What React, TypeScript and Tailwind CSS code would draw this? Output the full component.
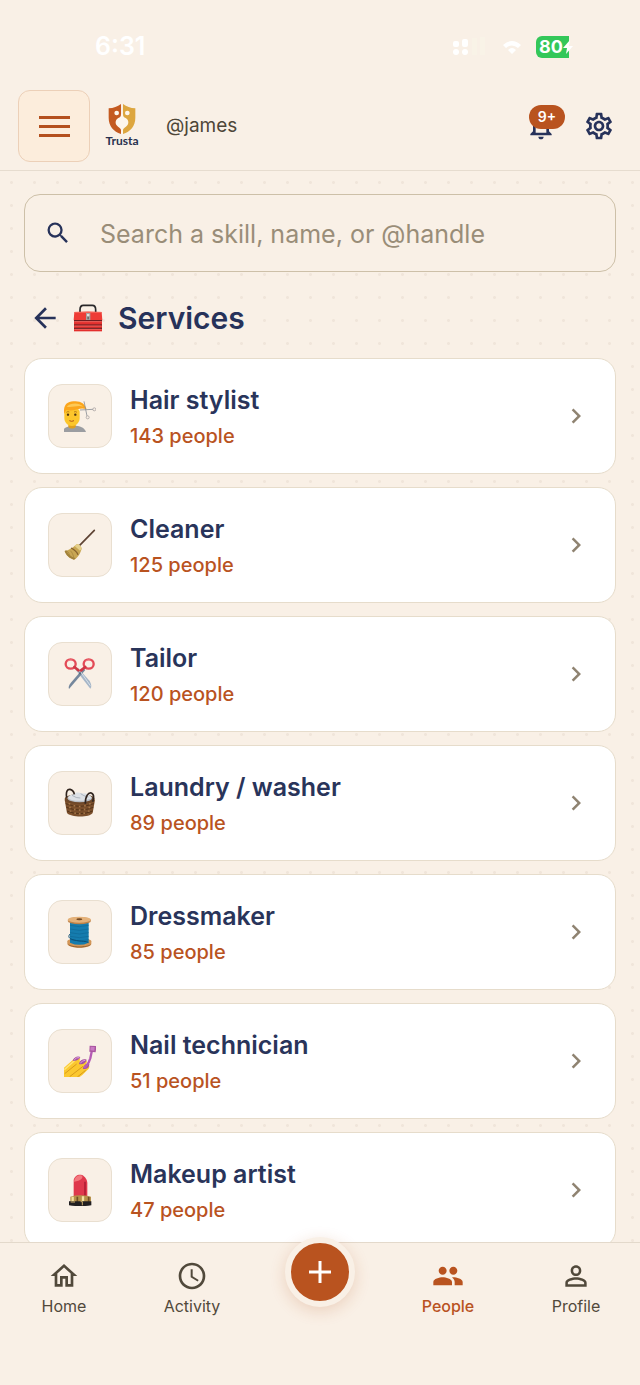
/**
 * Services directory screen
 * Lists the skills in a category with the number of people offering each
 */

import React from 'react'
import {
  MdAccessTime,
  MdArrowBack,
  MdChevronRight,
  MdNotificationsNone,
  MdOutlineHome,
  MdOutlineSettings,
  MdPeople,
  MdPersonOutline,
  MdSearch,
} from 'react-icons/md'

function HairIcon() {
  return (
    <svg viewBox="0 0 96 96" className="size-8" aria-hidden="true">
      <path d="M0 96V86c6-6 16-8 28-9 20 0 34 5 38 19z" fill="#9b9da1" />
      <path d="M13 68h22v13c-6 6-16 6-22 0z" fill="#e0a01d" />
      <path d="M1 36c0-18 46-18 46 0v18c0 14-11 24-23 24S1 68 1 54z" fill="#fcc62c" />
      <path d="M0 42C-2 18 6 5 28 4c22-2 34 6 40 24-12-4-20-2-27 0-12 4-24 4-34 2-3 4-4 8-7 12z" fill="#fba51c" />
      <path d="M8 20C20 8 44 6 58 20c-16-6-34 4-50 0z" fill="#fdc956" />
      <circle cx="12" cy="44" r="3.5" fill="#4f3415" />
      <circle cx="34" cy="44" r="3.5" fill="#4f3415" />
      <path d="M7 37q5-4 9-1M30 36q5-3 9 1" fill="none" stroke="#9a5e12" strokeWidth="2" />
      <path d="M16 62q7 4 14 0" fill="none" stroke="#b3541b" strokeWidth="3" />
      <path d="M48 30L87 28M60 4L69 48" stroke="#8c9097" strokeWidth="2.5" />
      <circle cx="91" cy="28" r="4.5" fill="none" stroke="#a9a3a3" strokeWidth="2.5" />
      <circle cx="71" cy="52" r="4.5" fill="none" stroke="#a9a3a3" strokeWidth="2.5" />
    </svg>
  )
}

function BroomIcon() {
  return (
    <svg viewBox="0 0 96 96" className="size-8" aria-hidden="true">
      <path d="M44 52L91 4" stroke="#5e4334" strokeWidth="5" strokeLinecap="round" />
      <path d="M36 47c6-4 15 2 17 12-4 15-12 28-23 33C16 88 5 78 2 66c12-3 24-9 34-19z" fill="#c8a653" />
      <path d="M36 47c6-4 15 2 17 12l-5 6c-5-4-12-10-16-14z" fill="#e5cf8a" />
      <path d="M21 57c9 4 17 11 21 20" fill="none" stroke="#85602c" strokeWidth="4" />
      <path d="M9 66c5 4 7 8 9 17M19 65c5 5 9 12 11 24" fill="none" stroke="#a1813b" strokeWidth="2" />
      <path d="M2 66c4 12 14 22 28 26l5-4C21 84 11 76 7 64z" fill="#a1813b" />
    </svg>
  )
}

function ScissorsIcon() {
  return (
    <svg viewBox="0 0 96 96" className="size-8" aria-hidden="true">
      <path d="M35 35l44 57c5-5 3-14-2-23L43 31z" fill="#a6b6c8" />
      <path d="M58 31L20 75c-6 8-7 14-5 18l49-57z" fill="#75879c" />
      <path d="M44 33l35 50" stroke="#d7e0e9" strokeWidth="3" />
      <ellipse cx="20" cy="18" rx="15" ry="14" fill="none" stroke="#e34b57" strokeWidth="7" />
      <ellipse cx="74" cy="18" rx="15" ry="14" fill="none" stroke="#e34b57" strokeWidth="7" />
      <path d="M31 27l12 10M64 27L51 37" stroke="#ce3744" strokeWidth="8" strokeLinecap="round" />
      <path d="M10 10q7-7 15-4M64 10q7-7 15-4" fill="none" stroke="#f58c92" strokeWidth="2" />
      <circle cx="48" cy="46" r="3" fill="#586879" />
    </svg>
  )
}

function BasketIcon() {
  return (
    <svg viewBox="0 0 96 96" className="size-8" aria-hidden="true">
      <path d="M2 38l7 40c9 13 67 15 77 0l7-40z" fill="#7a4e2b" />
      <path d="M5 50q42 16 85 0M7 61q41 16 81 0M9 72q38 16 77 0" fill="none" stroke="#553419" strokeWidth="3" />
      <path d="M16 48l5 34M31 54l3 32M47 56v32M63 54l-3 32M78 48l-5 34" stroke="#a37446" strokeWidth="5" strokeDasharray="5 6" />
      <ellipse cx="47" cy="36" rx="45" ry="15" fill="#6d4729" />
      <ellipse cx="47" cy="33" rx="37" ry="13" fill="#b8bdc4" />
      <path d="M12 32c8-12 18-8 24-15 12-3 19 4 27 2 9 2 16 7 20 13-13 11-59 14-71 0z" fill="#dde1e6" />
      <path d="M24 25q13 9 25 8M50 20q8 7 23 10" fill="none" stroke="#969da7" strokeWidth="2" />
      <path d="M8 32C5 14 10 6 18 7c8 2 12 8 13 15M64 50c0-24 9-34 18-32 9 4 8 14 4 26" fill="none" stroke="#30241e" strokeWidth="5" />
    </svg>
  )
}

function ThreadIcon() {
  return (
    <svg viewBox="0 0 96 96" className="size-8" aria-hidden="true">
      <path d="M10 76c0-12 72-12 72 0v8c-4 15-66 15-72 0z" fill="#d29658" />
      <path d="M12 84c10 10 60 10 69 0-5 14-64 14-69 0z" fill="#925e2d" />
      <path d="M18 19h56v61q-28 13-56 0z" fill="#157cae" />
      <path d="M18 28q28 8 56 0M18 39q28 8 56 0M18 50q28 8 56 0M18 61q28 8 56 0M18 71q28 8 56 0" fill="none" stroke="#0f6896" strokeWidth="2" />
      <path d="M18 54c-6 7-5 14 12 18 21 5 39 3 43 8" fill="none" stroke="#0a4e75" strokeWidth="3" />
      <ellipse cx="46" cy="14" rx="35" ry="11" fill="#be8147" />
      <ellipse cx="46" cy="11" rx="35" ry="9" fill="#e4b179" />
      <ellipse cx="46" cy="10" rx="9" ry="3" fill="#754a24" />
    </svg>
  )
}

function NailsIcon() {
  return (
    <svg viewBox="0 0 96 96" className="size-8" aria-hidden="true">
      <path d="M0 68l34-30c9-5 18 2 12 11l15-5c8 0 10 7 5 12 9 0 13 8 8 15L55 90l-8 6H0z" fill="#fbc82f" />
      <path d="M2 86l36-29M17 95l40-31M40 96l25-20" stroke="#d79a1b" strokeWidth="3" />
      <path d="M1 74l32-28" stroke="#ffe476" strokeWidth="4" />
      <path d="M26 47c3-10 15-16 23-11-4 9-13 13-23 11zM45 57c2-11 13-17 23-13-2 9-12 16-23 13zM57 72c0-11 9-17 19-16 0 11-8 18-19 16z" fill="#a450a3" />
      <path d="M31 44q7-8 15-6M49 54q7-8 15-8M61 68q4-8 11-9" fill="none" stroke="#e2a1df" strokeWidth="3" />
      <path d="M83 20L79 40c-3 12-6 17-15 27" fill="none" stroke="#b55ab5" strokeWidth="7" strokeLinecap="round" />
      <path d="M77 2l20 1-2 19-19-2z" fill="#aa55a0" />
      <path d="M80 5l12 1-1 11-12-1z" fill="#ca7bc3" />
    </svg>
  )
}

function LipstickIcon() {
  return (
    <svg viewBox="0 0 96 96" className="size-8" aria-hidden="true">
      <path d="M29 70V19C31 5 43 0 54 3c9 4 16 15 16 25v43z" fill="#df384c" />
      <path d="M30 23C32 7 45 1 54 5c5 6-4 15-24 18z" fill="#f3777d" />
      <path d="M63 23v47" stroke="#b92137" strokeWidth="6" />
      <path d="M19 68q29-8 62 0v16H19z" fill="#b6914a" />
      <path d="M26 68v15M57 67v16" stroke="#f3e2a0" strokeWidth="7" />
      <path d="M40 68v15M74 68v15" stroke="#705025" strokeWidth="5" />
      <path d="M15 82h67v12q-33 5-67 0z" fill="#211f21" />
      <path d="M20 84h13M50 83h5v11" fill="none" stroke="#c7a86a" strokeWidth="3" />
    </svg>
  )
}

function ToolboxIcon() {
  return (
    <svg viewBox="0 0 90 84" className="h-7 w-[30px] shrink-0" aria-hidden="true">
      <path d="M21 25v-8c0-9 4-13 10-13h27c7 0 10 4 10 13v8" fill="none" stroke="#29282a" strokeWidth="5" />
      <path d="M4 24q41-3 82 0l2 25H2z" fill="#ee3c36" />
      <path d="M5 25h80" stroke="#fb7d70" strokeWidth="2" />
      <path d="M3 48h84v34H3z" fill="#e32f2d" />
      <path d="M3 50h84M3 63h84M3 73h84" stroke="#591c21" strokeWidth="3" />
      <path d="M4 53h82M4 66h82M4 76h82" stroke="#ff9b91" strokeWidth="1.5" />
      <path d="M39 27h13v21H39z" fill="#a5a1a0" />
      <path d="M42 30h7v6h-7z" fill="#e3dfdb" />
      <path d="M43 39h5v7h-5z" fill="#6e6b6b" />
    </svg>
  )
}

function ShieldLogo() {
  return (
    <svg viewBox="0 0 84 90" className="h-[30px] w-7" aria-hidden="true">
      <path d="M39 0v90C17 83 2 66 2 41V13C17 12 28 8 39 0z" fill="#c45a20" />
      <path d="M45 0v90c22-7 37-24 37-49V13C67 12 56 8 45 0z" fill="#dda63f" />
      {/* Two heads over the shared body */}
      <g fill="#fdf6ec">
        <circle cx="26" cy="27" r="7" />
        <circle cx="58" cy="27" r="7" />
        <path d="M39 30h6c0 8 3 10 8 12 9 5 10 15 5 22-4 5-11 8-13 13v13h-6V77c-2-5-9-8-13-13-5-7-4-17 5-22 5-2 8-4 8-12z" />
      </g>
    </svg>
  )
}

const services = [
  { name: 'Hair stylist', count: 143, icon: <HairIcon /> },
  { name: 'Cleaner', count: 125, icon: <BroomIcon /> },
  { name: 'Tailor', count: 120, icon: <ScissorsIcon /> },
  { name: 'Laundry / washer', count: 89, icon: <BasketIcon /> },
  { name: 'Dressmaker', count: 85, icon: <ThreadIcon /> },
  { name: 'Nail technician', count: 51, icon: <NailsIcon /> },
  { name: 'Makeup artist', count: 47, icon: <LipstickIcon /> },
]

function StatusBar() {
  return (
    <div className="flex h-[90px] items-center justify-between pt-1 pr-[71px] pl-[95px] text-white">
      <span className="text-[25px] font-semibold">6:31</span>
      <div className="flex items-center">
        <svg viewBox="0 0 34 20" className="mr-4 h-5 w-[34px]" aria-hidden="true">
          <g fill="#ffffff">
            <rect x="1" y="4" width="6" height="6" rx="2" />
            <rect x="10" y="2" width="6" height="8" rx="2" />
            <circle cx="4" cy="15" r="3" />
            <circle cx="13" cy="15" r="3" />
          </g>
          <path d="M20 1h5v17h-5zM28 0h5v18h-5z" fill="#f9f3e7" />
        </svg>
        <svg viewBox="0 0 20 14" className="mr-[14px] h-[14px] w-5" fill="white" aria-hidden="true">
          <path d="M1 5q9-8 18 0l-3 3q-6-5-12 0z" />
          <path d="M6 10q4-4 8 0l-4 4z" />
        </svg>
        <span className="flex h-[22px] w-[33px] items-center rounded-l-md bg-[#34c759] pl-[3px] text-lg font-bold">
          80
          <svg viewBox="0 0 10 14" className="h-[14px] w-[10px] shrink-0" fill="white" aria-hidden="true">
            <path d="M7 0L0 8h4l-1 6 7-8H6z" />
          </svg>
        </span>
      </div>
    </div>
  )
}

function Header() {
  return (
    <header className="shrink-0 border-b border-[#e6dccf]">
      <StatusBar />
      <div className="flex items-center px-[18px] pb-2">
        <button
          aria-label="Menu"
          className="flex size-[72px] flex-col items-center justify-center gap-[6px] rounded-xl border border-[#ecd0b8] bg-[#fceddc]"
        >
          <span className="h-[3px] w-[31px] bg-[#b4501e]" />
          <span className="h-[3px] w-[31px] bg-[#b4501e]" />
          <span className="h-[3px] w-[31px] bg-[#b4501e]" />
        </button>
        <a href="#home" className="ml-[14px] flex w-9 flex-col items-center">
          <ShieldLogo />
          <span className="font-['Lato',sans-serif] text-xs leading-[14px] font-bold text-[#28304f]">Trusta</span>
        </a>
        <span className="ml-[26px] text-[19px] text-[#4e4638]">@james</span>
        <div className="ml-auto flex items-center gap-[26px] pr-[7px] text-[#27325a]">
          <button aria-label="Notifications" className="relative">
            <MdNotificationsNone className="size-8" />
            <span className="absolute -top-[5px] left-1 flex h-6 w-9 items-center justify-center rounded-full bg-[#b9531f] text-sm font-semibold text-white">
              9+
            </span>
          </button>
          <button aria-label="Settings">
            <MdOutlineSettings className="size-8" />
          </button>
        </div>
      </div>
    </header>
  )
}

interface ServiceCardProps {
  name: string
  count: number
  icon: React.ReactNode
}

function ServiceCard({ name, count, icon }: ServiceCardProps) {
  return (
    <li>
      <a
        href="#service"
        className="flex h-[116px] items-center rounded-[18px] border border-[#e6dccb] bg-white pr-6 pl-[23px]"
      >
        <span className="flex size-16 items-center justify-center rounded-[14px] border border-[#e9dfd0] bg-[#f9f0e6]">
          {icon}
        </span>
        <span className="ml-[18px] flex flex-1 flex-col gap-1 pt-1">
          <span className="text-[25px] leading-8 font-semibold text-[#29345a]">{name}</span>
          <span className="text-xl leading-8 font-medium text-[#b9531f]">{count} people</span>
        </span>
        <MdChevronRight className="size-[30px] text-[#8f8371]" />
      </a>
    </li>
  )
}

function BottomNav() {
  const item = 'flex flex-col items-center gap-[2px]'

  return (
    <nav className="relative grid h-[143px] shrink-0 grid-cols-5 border-t border-[#e3d9cb] bg-[#f9f0e6] pt-[17px] text-base text-[#51493b]">
      <a href="#home" className={item}>
        <MdOutlineHome className="size-8" />
        Home
      </a>
      <a href="#activity" className={item}>
        <MdAccessTime className="size-8" />
        Activity
      </a>
      <div className="flex justify-center">
        {/* Floating add button, raised over the bar */}
        <button
          aria-label="Add"
          className="absolute -top-[6px] flex size-[70px] items-center justify-center rounded-full border-[6px] border-[#f9f0e6] bg-[#b9531f] shadow-[0_4px_16px_rgba(185,83,31,0.2)]"
        >
          <svg viewBox="0 0 24 24" className="size-6" stroke="white" strokeWidth="3" aria-hidden="true">
            <path d="M12 1v22M1 12h22" />
          </svg>
        </button>
      </div>
      <a href="#people" aria-current="page" className="flex flex-col items-center gap-[2px] font-medium text-[#b9531f]">
        <MdPeople className="size-8" />
        People
      </a>
      <a href="#profile" className={item}>
        <MdPersonOutline className="size-8" />
        Profile
      </a>
    </nav>
  )
}

export default function App() {
  return (
    <div className="flex h-screen flex-col bg-[#f9f0e6] font-['Inter',sans-serif]">
      <Header />
      <main className="min-h-0 flex-1 overflow-y-auto bg-[radial-gradient(circle,#f0e5da_1px,transparent_2px)] bg-size-[23px_23px] px-6 pt-[23px] [scrollbar-width:none]">
        {/* Search */}
        <label className="flex h-[78px] items-center rounded-2xl border border-[#cdc0a8] bg-[#f9f0e6] px-[19px]">
          <MdSearch className="size-7 shrink-0 text-[#27325a]" />
          <input
            type="search"
            aria-label="Search"
            placeholder="Search a skill, name, or @handle"
            className="ml-7 min-w-0 flex-1 bg-transparent pt-1 text-[25px] outline-none placeholder:text-[#998d78]"
          />
        </label>

        <div className="flex h-[86px] items-center pt-[6px] pl-[5px] text-[#27325a]">
          <button aria-label="Back">
            <MdArrowBack className="size-8" />
          </button>
          <h1 className="ml-3 flex items-center gap-[15px] text-[30px] font-semibold">
            <ToolboxIcon />
            Services
          </h1>
        </div>

        <ul className="flex flex-col gap-[13px]">
          {services.map((service) => (
            <ServiceCard key={service.name} {...service} />
          ))}
        </ul>
      </main>
      <BottomNav />
    </div>
  )
}
